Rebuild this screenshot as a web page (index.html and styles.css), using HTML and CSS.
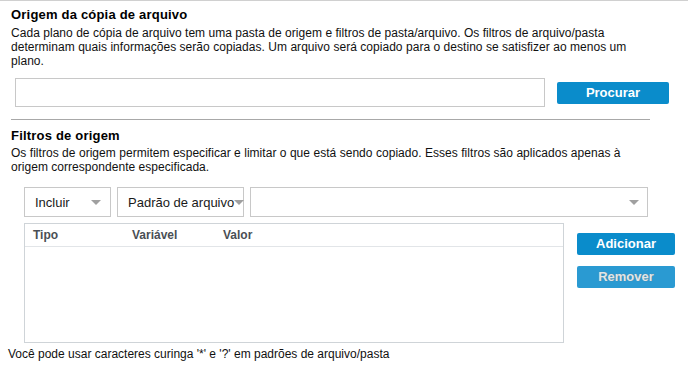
FILE: index.html
```html
<!DOCTYPE html>
<html>
<head>
<meta charset="utf-8">
<link rel="stylesheet" href="styles.css">
</head>
<body>
<div class="page">
  <section class="source">
    <h2 class="heading">Origem da cópia de arquivo</h2>
    <p class="desc">Cada plano de cópia de arquivo tem uma pasta de origem e filtros de pasta/arquivo. Os filtros de arquivo/pasta determinam quais informações serão copiadas. Um arquivo será copiado para o destino se satisfizer ao menos um plano.</p>
    <div class="browse-row">
      <div class="text-input"></div>
      <button class="btn btn-browse">Procurar</button>
    </div>
  </section>
  <hr class="sep">
  <section class="filters">
    <h2 class="heading">Filtros de origem</h2>
    <p class="desc">Os filtros de origem permitem especificar e limitar o que está sendo copiado. Esses filtros são aplicados apenas à origem correspondente especificada.</p>
    <div class="filter-body">
      <div class="select-row">
        <div class="select sel-include"><span>Incluir</span><i class="caret"></i></div>
        <div class="select sel-pattern"><span>Padrão de arquivo</span><i class="caret"></i></div>
        <div class="select sel-value"><span></span><i class="caret"></i></div>
      </div>
      <div class="table-row">
        <div class="grid">
          <div class="grid-head">
            <span class="col-tipo">Tipo</span>
            <span class="col-var">Variável</span>
            <span class="col-val">Valor</span>
          </div>
        </div>
        <div class="side-buttons">
          <button class="btn btn-add">Adicionar</button>
          <button class="btn btn-remove">Remover</button>
        </div>
      </div>
    </div>
    <p class="note">Você pode usar caracteres curinga '*' e '?' em padrões de arquivo/pasta</p>
  </section>
</div>
</body>
</html>
```

FILE: styles.css
```css
* { box-sizing: border-box; }
html, body { margin: 0; padding: 0; background: #fff; }
body {
  font-family: "Liberation Sans", Arial, sans-serif;
  font-size: 12px;
  color: #111;
  width: 688px;
  height: 367px;
  overflow: hidden;
}
.page {
  border-top: 1px solid #d0d0d0;
  padding: 0 0 0 11px;
}
.heading {
  margin: 0;
  font-family: "Liberation Sans", Arial, sans-serif;
  font-weight: bold;
  font-size: 13px;
  line-height: 15px;
  padding-top: 6px;
  letter-spacing: 0.2px;
  color: #000;
}
.desc {
  margin: 4px 0 0;
  line-height: 14px;
  width: 640px;
  letter-spacing: 0.04px;
}
.browse-row {
  display: flex;
  align-items: center;
  margin-top: 10px;
  padding-left: 4px;
}
.text-input {
  width: 530px;
  height: 29px;
  border: 1px solid #c8c8c8;
  background: #fff;
}
.btn {
  border: 0;
  border-radius: 2px;
  background: #0a8ccb;
  color: #fff;
  font-family: "Liberation Sans", Arial, sans-serif;
  font-weight: bold;
  font-size: 13px;
  padding: 0;
  height: 22px;
  line-height: 22px;
  text-align: center;
  cursor: pointer;
}
.btn-browse {
  width: 112px;
  margin-left: 12px;
}
.sep {
  margin: 12px 0 0;
  width: 639px;
  border: 0;
  border-top: 1px solid #a8a8a8;
  height: 0;
}
.filters .heading { padding-top: 8px; }
.filters .desc { margin-top: 3px; }
.filter-body {
  padding-left: 13px;
  margin-top: 13px;
}
.select-row {
  display: flex;
  gap: 6px;
}
.select {
  height: 30px;
  border: 1px solid #c8c8c8;
  display: flex;
  align-items: center;
  padding: 0 9px 0 10px;
  font-size: 13px;
  color: #1a1a1a;
}
.select span { flex: 1; white-space: nowrap; }
.caret {
  width: 0;
  height: 0;
  border-left: 5px solid transparent;
  border-right: 5px solid transparent;
  border-top: 5px solid #a0a0a0;
}
.sel-include { width: 87px; }
.sel-pattern { width: 127px; padding-right: 3px; }
.sel-value { width: 398px; padding-right: 8px; }
.table-row {
  display: flex;
  margin-top: 6px;
  gap: 13px;
}
.grid {
  width: 540px;
  height: 120px;
  border: 1px solid #cfd4d8;
}
.grid-head {
  height: 23px;
  border-bottom: 1px solid #e2e5e8;
  display: flex;
  align-items: center;
  font-weight: bold;
  color: #4a4f55;
  font-size: 12px;
}
.col-tipo { width: 107px; padding-left: 8px; }
.col-var { width: 91px; }
.col-val { width: 80px; }
.side-buttons {
  display: flex;
  flex-direction: column;
  gap: 11px;
  padding-top: 10px;
}
.btn-add, .btn-remove { width: 98px; }
.btn-remove {
  background: #2a9ad2;
  color: #dfe6ea;
  text-shadow: 0 0 1px #6b7a80;
}
.note {
  margin: 4px 0 0 -3px;
  line-height: 14px;
}
```
